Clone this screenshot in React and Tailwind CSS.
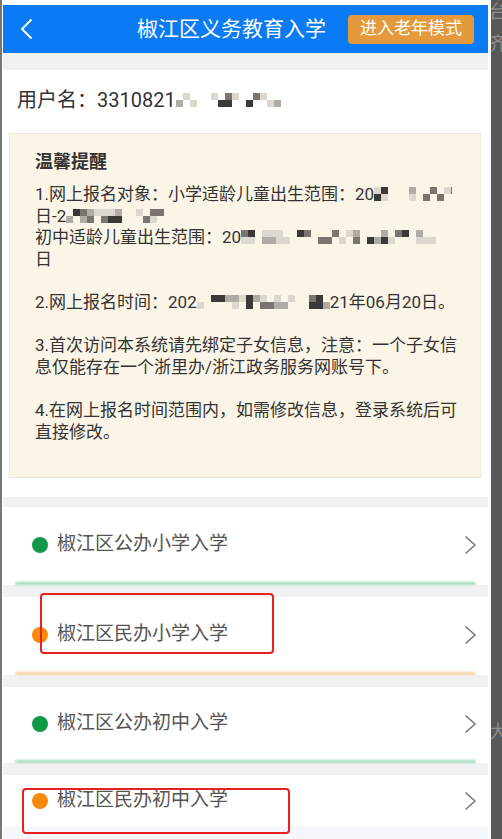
import React from 'react';

const FONT = "font-['Roboto','Noto_Sans_CJK_SC',sans-serif]";

// pixelated block used where the screenshot has been masked
function Mosaic({ w, seed, h = 14 }) {
  const cell = 7;
  const cols = Math.ceil(w / cell);
  let s = seed;
  const rand = () => {
    s = (s * 9301 + 49297) % 233280;
    return s / 233280;
  };
  const rects = [];
  for (let r = 0; r < Math.ceil(h / cell); r++) {
    for (let c = 0; c < cols; c++) {
      const v = rand();
      let fill = null;
      if (v > 0.88) fill = '#3b3935';
      else if (v > 0.78) fill = '#7a756f';
      else if (v > 0.66) fill = '#b0aba4';
      else if (v > 0.5) fill = '#dcd7cf';
      if (fill) rects.push(<rect key={r + '-' + c} x={c * cell} y={r * cell} width={cell} height={cell} fill={fill} />);
    }
  }
  return (
    <svg width={w} height={h} className="inline-block align-[-1px]">
      {rects}
    </svg>
  );
}

function Chevron() {
  return (
    <svg width="13" height="20" viewBox="0 0 13 20" className="ml-auto">
      <polyline points="1.5,1.5 11,10 1.5,18.5" fill="none" stroke="#7a7a7a" strokeWidth="1.6" />
    </svg>
  );
}

function ListItem({ label, dot, line, height }) {
  return (
    <div>
      <div className={`flex items-center bg-white pl-[29px] pr-[11px] ${height}`}>
        <span className={`w-[16px] h-[16px] rounded-full ${dot}`} />
        <span className="ml-[9px] text-[19px] text-[#555]">{label}</span>
        <Chevron />
      </div>
      <div className="bg-white">
        <div className={`h-[3px] mx-[12px] rounded-full blur-[0.8px] ${line}`} />
      </div>
    </div>
  );
}

export default function App() {
  return (
    <div className={`relative w-[502px] h-[839px] overflow-hidden flex bg-[#585858] ${FONT}`}>
      {/* phone screen */}
      <div className="w-[491px] h-full bg-white border-l-2 border-[#777] pl-px pr-[3px] pt-[5px] flex flex-col">
        <div className="h-[48px] bg-[#0a7af5] flex items-center pl-[17px] shrink-0">
          <svg width="13" height="22" viewBox="0 0 13 22">
            <polyline points="11.5,1.5 2,11 11.5,20.5" fill="none" stroke="#fff" strokeWidth="2" />
          </svg>
          <span className="ml-[104px] text-[21px] text-white leading-none">椒江区义务教育入学</span>
          <span className="ml-[22px] w-[126px] h-[29px] rounded-[4px] bg-[#e49a3c] text-white text-[17px] flex items-center justify-center">
            进入老年模式
          </span>
        </div>
        <div className="h-[17px] bg-[#f1f1f3] shrink-0" />

        <div className="pt-[16px] pl-[14px] text-[20px] leading-[28px] text-[#333] flex items-center">
          <span>用户名：3310821</span>
          <Mosaic w={106} seed={7} h={14} />
        </div>

        <div className="mt-[19px] ml-[6px] w-[472px] h-[345px] bg-[#fbf5e7] border border-[#f1e9d6] pt-[15px] pl-[25px] text-[#333]">
          <div className="text-[18px] leading-[26px] font-bold">温馨提醒</div>
          <div className="mt-[9px] text-[17px] leading-[21.6px] whitespace-nowrap">
            <div>1.网上报名对象：小学适龄儿童出生范围：20<Mosaic w={78} seed={11} /></div>
            <div>日-2<Mosaic w={98} seed={23} /></div>
            <div>初中适龄儿童出生范围：20<Mosaic w={195} seed={41} /></div>
            <div>日</div>
            <div className="h-[21.6px]" />
            <div>2.网上报名时间：202<Mosaic w={133} seed={57} />21年06月20日。</div>
            <div className="h-[21.6px]" />
            <div>3.首次访问本系统请先绑定子女信息，注意：一个子女信</div>
            <div>息仅能存在一个浙里办/浙江政务服务网账号下。</div>
            <div className="h-[21.6px]" />
            <div>4.在网上报名时间范围内，如需修改信息，登录系统后可</div>
            <div>直接修改。</div>
          </div>
        </div>

        <div className="h-[19px] bg-white shrink-0" />
        <div className="h-[10px] bg-[#f1f1f3] shrink-0" />
        <ListItem label="椒江区公办小学入学" dot="bg-[#119748]" line="bg-[#9fd9bb]" height="h-[75px]" />
        <div className="h-[12px] bg-[#f1f1f3] shrink-0" />
        <ListItem label="椒江区民办小学入学" dot="bg-[#f7890c]" line="bg-[#f8cf9c]" height="h-[75px]" />
        <div className="h-[12px] bg-[#f1f1f3] shrink-0" />
        <ListItem label="椒江区公办初中入学" dot="bg-[#119748]" line="bg-[#9fd9bb]" height="h-[73px]" />
        <div className="h-[12px] bg-[#f1f1f3] shrink-0" />
        <div className="flex items-center bg-white pl-[29px] pr-[11px] h-[51px] shrink-0">
          <span className="w-[16px] h-[16px] rounded-full bg-[#f7890c]" />
          <span className="ml-[9px] text-[19px] text-[#555]">椒江区民办初中入学</span>
          <Chevron />
        </div>
        <div className="flex-1 bg-[#f4f7fb]" />
      </div>

      {/* dark margin beside the screen; glyphs of the next window are cut off there */}
      <div className="flex-1 flex flex-col text-[18px] leading-none text-[#8e8e8e] overflow-hidden">
        <span className="mt-[3px] -ml-[2px]">台</span>
        <span className="mt-[14px] -ml-[2px]">齐</span>
        <span className="mt-[670px] -ml-[2px]">大</span>
      </div>

      {/* red annotation boxes */}
      <div className="absolute left-[40px] top-[593px] w-[234px] h-[61px] border-2 border-[#e8201f] rounded-[4px]" />
      <div className="absolute left-[22px] top-[788px] w-[268px] h-[46px] border-2 border-[#e8201f] rounded-[4px]" />
    </div>
  );
}
